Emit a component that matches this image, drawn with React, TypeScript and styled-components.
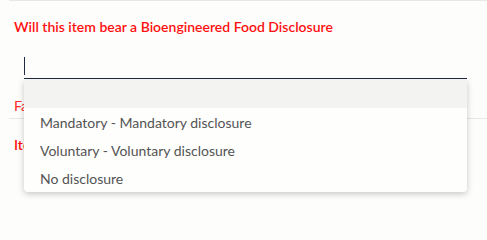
import React from "react";
import styled, { createGlobalStyle } from "styled-components";

const GlobalStyle = createGlobalStyle`
  html, body {
    margin: 0;
    padding: 0;
    background: #fdfdfb;
    font-family: Lato, "Open Sans", sans-serif;
    overflow: hidden;
  }
`;

const Page = styled.div`
  padding-left: 9px;
  min-height: 202px;
`;

const Section = styled.section`
  border-top: 1px solid #e8e8e6;
  padding: 0 0 0 5px;
`;

const Heading = styled.div`
  color: #ff1010;
  font-size: 14px;
  font-weight: 600;
  line-height: 18px;
  padding-top: 17px;
`;

const FieldWrap = styled.div`
  position: relative;
  margin: 20px 20px 0 10px;
`;

const Input = styled.div`
  height: 23px;
  border-bottom: 1px solid #1e2a40;
  display: flex;
  align-items: flex-start;
  padding-top: 1px;
  box-sizing: border-box;
`;

const Caret = styled.span`
  width: 1px;
  height: 18px;
  background: #1e2a40;
`;

const HelpText = styled.div`
  color: #ff2a2a;
  font-size: 14px;
  line-height: 18px;
  padding: 18px 0 3px;
`;

const Menu = styled.ul`
  position: absolute;
  top: 24px;
  left: 0;
  right: 0;
  margin: 0;
  padding: 0;
  list-style: none;
  background: #fefefd;
  border-radius: 0 0 4px 4px;
  box-shadow: 0 2px 6px rgba(0, 0, 0, 0.22);
  z-index: 2;
`;

const Option = styled.li<{ $active?: boolean }>`
  height: 28px;
  display: flex;
  align-items: center;
  padding: 1px 16px 0;
  box-sizing: border-box;
  font-size: 14px;
  color: #545454;
  background: ${(p) => (p.$active ? "#f3f3f1" : "transparent")};
`;

const options = [
  "",
  "Mandatory - Mandatory disclosure",
  "Voluntary - Voluntary disclosure",
  "No disclosure",
];

export default function App() {
  return (
    <>
      <GlobalStyle />
      <Page>
        <Section>
          <Heading>Will this item bear a Bioengineered Food Disclosure</Heading>
          <FieldWrap>
            <Input>
              <Caret />
            </Input>
            <Menu>
              {options.map((o, i) => (
                <Option key={i} $active={i === 0}>
                  {o}
                </Option>
              ))}
            </Menu>
          </FieldWrap>
          <HelpText>Failed to load disclosure options</HelpText>
        </Section>
        <Section>
          <Heading>Item contains bioengineered ingredients</Heading>
        </Section>
      </Page>
    </>
  );
}
